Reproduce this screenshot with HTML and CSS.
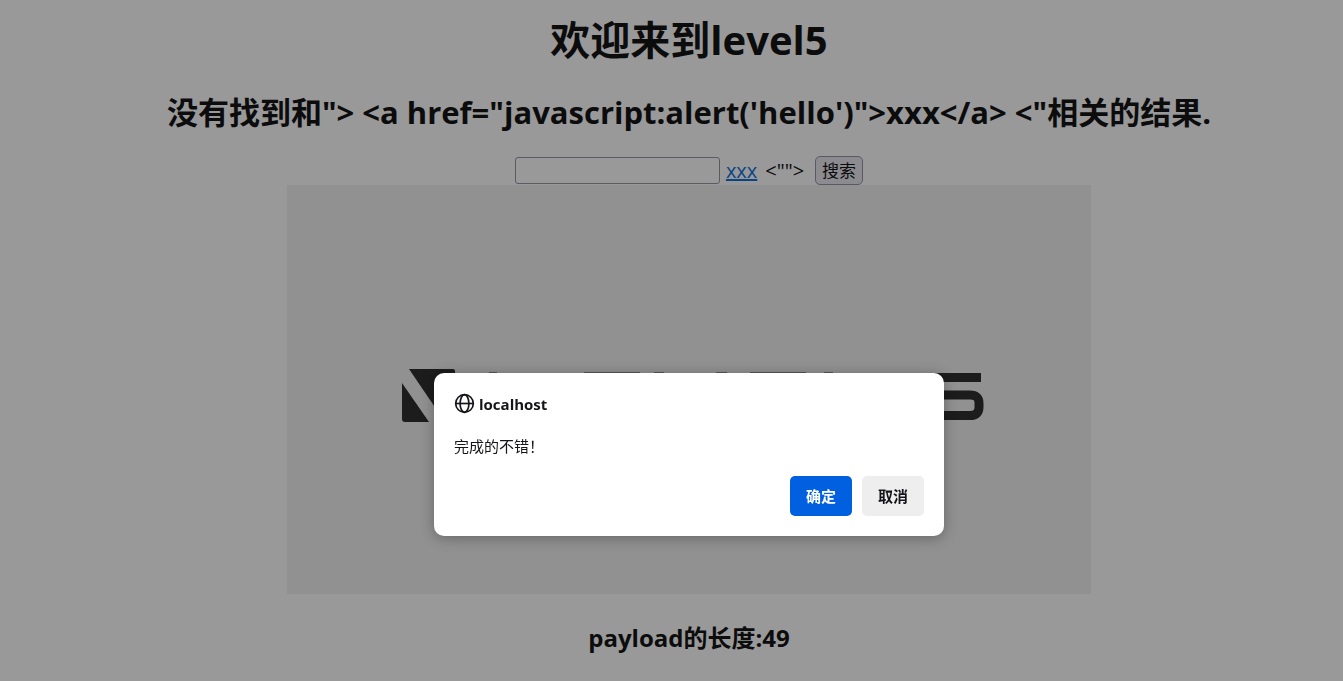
FILE: index.html
```html
<!DOCTYPE html>
<html lang="zh-CN">
<head>
<meta charset="utf-8">
<title>欢迎来到level5</title>
<link rel="stylesheet" href="styles.css">
</head>
<body>
<main class="page">
  <h1 class="title">欢迎来到level5</h1>
  <h2 class="result">没有找到和"&gt; &lt;a href="javascript:alert('hello')"&gt;xxx&lt;/a&gt; &lt;"相关的结果.</h2>
  <form class="search">
    <input class="search-box" type="text" aria-label="搜索">
    <a class="search-link" href="#">xxx</a>
    <span class="search-rest">&lt;""&gt;</span>
    <button class="search-button" type="button">搜索</button>
  </form>
  <div class="banner">
    <svg class="banner-art" viewBox="0 0 804 409" role="img" aria-label="LEVEL 5">
      <g fill="#1c1c1d">
        <path d="M122 184H166Q168 184 168 186V237H158Z"/>
        <path d="M115 198L142 237H118Q115 237 115 234Z"/>
        <path fill="#555556" d="M202 187h8v48h-8zM297 187h56v10h-56zM367 187h10v48h-10zM429 187h11v48h-11zM463 187h56v10h-56zM537 187h9v48h-9z"/>
      </g>
      <path d="M694 192.500H628V210H683Q692 210 692 218V222Q692 230.500 683 230.500H632" fill="none" stroke="#1c1c1d" stroke-width="9"/>
    </svg>
  </div>
  <h3 class="length">payload的长度:49</h3>
</main>
<div class="overlay">
  <section class="dialog" role="alertdialog" aria-labelledby="origin" aria-describedby="message">
    <header class="dialog-head">
      <svg class="globe" viewBox="0 0 20 20" fill="none" stroke="#15141a" stroke-width="1.6" aria-hidden="true">
        <circle cx="10" cy="10" r="8.4"/><ellipse cx="10" cy="10" rx="4.2" ry="8.4"/><path d="M1.6 10H18.4"/>
      </svg>
      <strong id="origin">localhost</strong>
    </header>
    <p class="message" id="message">完成的不错！</p>
    <div class="actions">
      <button class="action primary" type="button">确定</button>
      <button class="action" type="button">取消</button>
    </div>
  </section>
</div>
</body>
</html>
```
FILE: styles.css
```css
* { box-sizing: border-box; }
body {
  margin: 0;
  background: #99999a;
  color: #0c0c0d;
  font: 17px/24px "Open Sans", "Noto Sans CJK SC", sans-serif;
}
.page {
  display: flex;
  flex-direction: column;
  align-items: center;
  padding: 12px 0 24px 35px;
}
.title, .result, .length { margin: 0; font-weight: 700; text-align: center; }
.title { font-size: 40px; line-height: 56px; }
.result { margin-top: 24px; font-size: 31px; line-height: 40px; white-space: nowrap; }
.search { display: flex; align-items: center; margin-top: 24px; }
.search-box {
  width: 205px;
  height: 27px;
  border: 1px solid #5a5a62;
  border-radius: 3px;
  background: #99999a;
  font: inherit;
}
.search-link { margin-left: 6px; color: #0a4484; font-size: 20px; }
.search-rest { margin-left: 8px; font-size: 20px; }
.search-button {
  width: 48px;
  height: 29px;
  margin-left: 11px;
  padding: 0;
  border: 1px solid #5a5a65;
  border-radius: 5px;
  background: #8c8c90;
  color: inherit;
  font: inherit;
}
.banner { width: 65%; max-width: 804px; background: #919192; }
.banner-art { display: block; width: 100%; }
.length { margin-top: 28px; font-size: 24px; line-height: 32px; }
.overlay {
  position: fixed;
  inset: 0;
  display: flex;
  justify-content: center;
  align-items: flex-start;
  padding: 373px 0 0 35px;
}
.dialog {
  width: 510px;
  padding: 20px;
  border-radius: 10px;
  background: #fff;
  color: #15141a;
  font-size: 15px;
  line-height: 20px;
  box-shadow: 0 2px 14px rgba(0, 0, 0, 0.3);
}
.dialog-head { display: flex; align-items: center; gap: 4px; }
.dialog-head strong { font-weight: 700; }
.globe { width: 21px; height: 21px; }
.message { margin: 22px 0 20px; }
.actions { display: flex; justify-content: flex-end; gap: 10px; }
.action {
  width: 62px;
  height: 40px;
  padding: 0;
  border: 0;
  border-radius: 5px;
  background: #eee;
  color: #15141a;
  font: inherit;
  font-weight: 600;
}
.primary { background: #0060df; color: #fff; }
```
